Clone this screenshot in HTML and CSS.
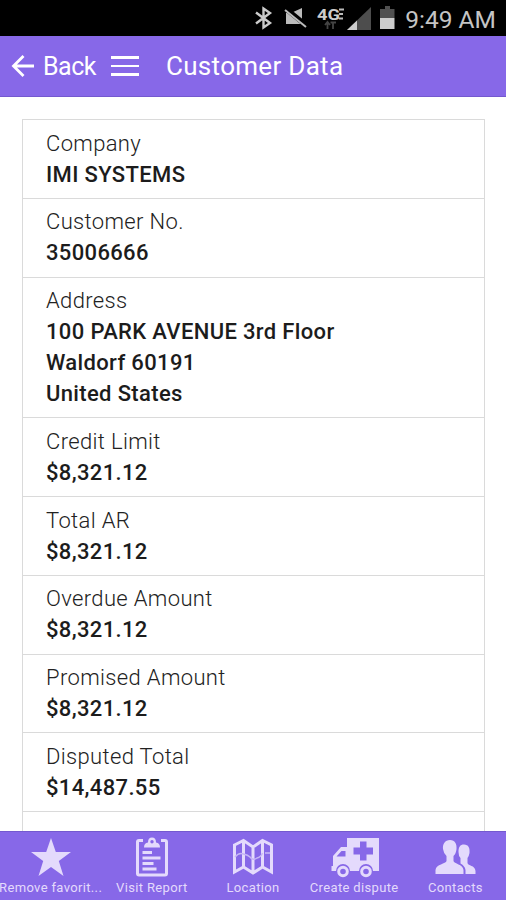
FILE: index.html
```html
<!DOCTYPE html>
<html lang="en">
<head>
    <meta charset="UTF-8">
    <meta name="viewport" content="width=device-width, initial-scale=1.0">
    <title>Customer Data</title>
    <link rel="stylesheet" href="styles.css">
</head>
<body>
    <div class="status">
        <svg class="statusIcons" width="150" height="36" viewBox="0 0 150 36">
            <!-- bluetooth -->
            <path d="M8 12.500 L22 23 L15.500 27.500 V8.500 L22 13 L8 23.500" fill="none" stroke="#ccc" stroke-width="2.400"/>
            <!-- muted speaker -->
            <path d="M38 13 H43 L54 8 V24 H38 Z" fill="#bbb"/>
            <path d="M37 8 L59 26" stroke="#000" stroke-width="5"/>
            <path d="M37 10 L58 27" stroke="#bbb" stroke-width="2"/>
            <!-- 4G LTE -->
            <text class="network" x="69" y="19.500" textLength="23" lengthAdjust="spacingAndGlyphs">4G</text>
            <path d="M91 9.500 H96 M91 14 H95 M91 18.500 H95" stroke="#bbb" stroke-width="2"/>
            <path d="M79.500 29 V22 M77 25 L79.500 22 L82 25 M85 22 V29 M82.500 22.500 H88" fill="none" stroke="#444" stroke-width="1.800"/>
            <!-- signal -->
            <path d="M99 30 L123 7 V30 Z" fill="#4d4d4d"/>
            <path d="M99 30 L109 20.500 V30 Z" fill="#ccc"/>
            <!-- battery -->
            <path d="M132 9 H137 V6 H142 V9 H146.500 V18 H132 Z" fill="#505050"/>
            <path d="M132 18 H146.500 V29 H132 Z" fill="#ccc"/>
        </svg>
        <span class="time">9:49 AM</span>
    </div>
    <div class="header">
        <svg class="arrow" width="24" height="24" viewBox="0 0 24 24">
            <path d="M12.500 2 L2.500 12 L12.500 22 M2.500 12 H23" fill="none" stroke="#fff" stroke-width="2.800"/>
        </svg>
        <span class="back">Back</span>
        <div class="menu">
            <div class="bar"></div>
            <div class="bar"></div>
            <div class="bar"></div>
        </div>
        <span class="title">Customer Data</span>
    </div>
    <div class="content">
        <div class="list">
            <div class="item">
                <div class="label">Company</div>
                <div class="value">IMI SYSTEMS</div>
            </div>
            <div class="item">
                <div class="label">Customer No.</div>
                <div class="value">35006666</div>
            </div>
            <div class="item">
                <div class="label">Address</div>
                <div class="value">100 PARK AVENUE 3rd Floor</div>
                <div class="value">Waldorf 60191</div>
                <div class="value">United States</div>
            </div>
            <div class="item">
                <div class="label">Credit Limit</div>
                <div class="value">$8,321.12</div>
            </div>
            <div class="item">
                <div class="label">Total AR</div>
                <div class="value">$8,321.12</div>
            </div>
            <div class="item">
                <div class="label">Overdue Amount</div>
                <div class="value">$8,321.12</div>
            </div>
            <div class="item">
                <div class="label">Promised Amount</div>
                <div class="value">$8,321.12</div>
            </div>
            <div class="item">
                <div class="label">Disputed Total</div>
                <div class="value">$14,487.55</div>
            </div>
            <div class="item"></div>
        </div>
    </div>
    <div class="tabs">
        <div class="tab">
            <svg width="50" height="44" viewBox="0 0 50 44">
                <path d="M25 2 L29.800 16 H45 L32.800 25 L37.500 40 L25 31 L12.500 40 L17.200 25 L5 16 H20.200 Z"/>
            </svg>
            <div class="tabText">Remove favorit...</div>
        </div>
        <div class="tab">
            <svg width="50" height="44" viewBox="0 0 50 44">
                <path class="line" d="M16 4.500 H12 Q10.500 4.500 10.500 6 V37.500 Q10.500 39 12 39 H38 Q39.500 39 39.500 37.500 V6 Q39.500 4.500 38 4.500 H34"/>
                <path fill-rule="evenodd" d="M17 11.500 Q17 7 21 6.500 Q21 1.500 25 1.500 Q29 1.500 29 6.500 Q33 7 33 11.500 Z M25 4 A1.700 1.700 0 1 0 25 7.400 A1.700 1.700 0 1 0 25 4 Z"/>
                <path class="line" d="M15.500 16.500 H25 M15.500 22 H33.500 M15.500 27.500 H26.500 M15.500 33 H29.500"/>
            </svg>
            <div class="tabText">Visit Report</div>
        </div>
        <div class="tab">
            <svg width="50" height="44" viewBox="0 0 50 44">
                <path class="line" d="M6.500 9 L15.500 4.500 L25 11 L34.500 4.500 L43.500 9 V36 L34.500 31 L25 37 L15.500 31 L6.500 36 Z M15.500 4.500 V31 M25 11 V37 M34.500 4.500 V31"/>
                <path class="thin" d="M7 21 Q11 16 15.500 18 Q20 19 22 21 Q25 25 29 22 Q33 21 34.500 17 M37 17 H42"/>
            </svg>
            <div class="tabText">Location</div>
        </div>
        <div class="tab">
            <svg width="54" height="44" viewBox="0 0 54 44">
                <path fill-rule="evenodd" d="M20 2 H52 V35 H46 A7 7 0 0 0 32 35 H23 A7 7 0 0 0 9 35 H4.500 V30 H6 V20 L14 11 H20 Z M9.500 20.500 H18.500 V15 H14.500 Z M33 5.500 V11.500 H26.500 V18.500 H33 V24.500 H39.500 V18.500 H46 V11.500 H39.500 V5.500 Z"/>
                <circle class="wheel" cx="16" cy="35.500" r="4.300"/>
                <circle class="wheel" cx="39" cy="35.500" r="4.300"/>
            </svg>
            <div class="tabText">Create dispute</div>
        </div>
        <div class="tab">
            <svg width="50" height="44" viewBox="0 0 50 44">
                <path d="M20 4 C25 4 27 8 26.500 13 Q26 18 23.500 20 V25 C24 28 33 28 33.500 34 V38 H5.500 V34 C6 28 16 28 16.500 25 V20 Q13.500 17 13 13 C12.500 8 15 4 20 4 Z"/>
                <path d="M34 8.500 C38.500 8.500 40 12 39.500 17 Q39 20 37.500 22 V27 C38 30 45 29 45.500 35 V38 H35.500 V34 Q35 30 30.500 27.500 V22 Q28.500 20 28.500 16 C28.500 11 30 8.500 34 8.500 Z"/>
            </svg>
            <div class="tabText">Contacts</div>
        </div>
    </div>
</body>
</html>
```

FILE: styles.css
```css
* {
    box-sizing: border-box;
}
body {
    margin: 0;
    height: 900px;
    overflow: hidden;
    display: flex;
    flex-direction: column;
    background-color: #fff;
    font-family: Roboto, "Liberation Sans", sans-serif;
}
.status {
    height: 36px;
    flex: none;
    display: flex;
    align-items: center;
    justify-content: flex-end;
    padding-right: 10px;
    background-color: #000;
    color: #c4c4c4;
}
.statusIcons {
    margin-right: 7px;
}
.network {
    fill: #ccc;
    font-size: 15px;
    font-weight: 700;
}
.time {
    font-size: 24.5px;
    line-height: 36px;
    padding-top: 3px;
}
.header {
    height: 61px;
    flex: none;
    display: flex;
    align-items: center;
    padding-left: 11px;
    background-color: #8768e8;
    border-bottom: 1px solid #7459cf;
    color: #fff;
    font-size: 26px;
}
.back {
    width: 53px;
    margin-left: 8px;
    font-size: 25px;
    letter-spacing: -0.5px;
}
.menu {
    width: 28px;
    margin-left: 15px;
    display: flex;
    flex-direction: column;
    gap: 6px;
}
.bar {
    height: 2.5px;
    background-color: #fff;
}
.title {
    margin-left: 27px;
    letter-spacing: 0.3px;
}
.content {
    flex: 1;
    min-height: 0;
    overflow: hidden;
    padding: 22px 21px 0 22px;
}
.list {
    border: 1.5px solid #dadada;
    border-bottom: none;
}
.item {
    min-height: 78.8px;
    padding: 8.7px 22.5px 7.3px 23px;
    border-bottom: 1px solid #dadada;
    font-size: 22px;
    line-height: 30.9px;
    letter-spacing: 0.35px;
}
.label {
    color: #222;
    font-weight: 300;
}
.value {
    color: #1c1c1c;
    font-weight: 500;
}
.tabs {
    height: 69px;
    flex: none;
    display: flex;
    background-color: #8768e8;
    border-top: 1px solid #7459cf;
}
.tab {
    flex: 1;
    min-width: 0;
    display: flex;
    flex-direction: column;
    align-items: center;
    padding-top: 4px;
    color: #e4dafc;
    fill: #e4dafc;
}
.tabText {
    font-size: 13px;
    line-height: 15px;
    letter-spacing: 0.35px;
    white-space: nowrap;
}
.line {
    fill: none;
    stroke: #e4dafc;
    stroke-width: 3;
}
.thin {
    fill: none;
    stroke: #c7b6f6;
    stroke-width: 1.5;
}
.wheel {
    fill: none;
    stroke: #e4dafc;
    stroke-width: 3;
}
```
